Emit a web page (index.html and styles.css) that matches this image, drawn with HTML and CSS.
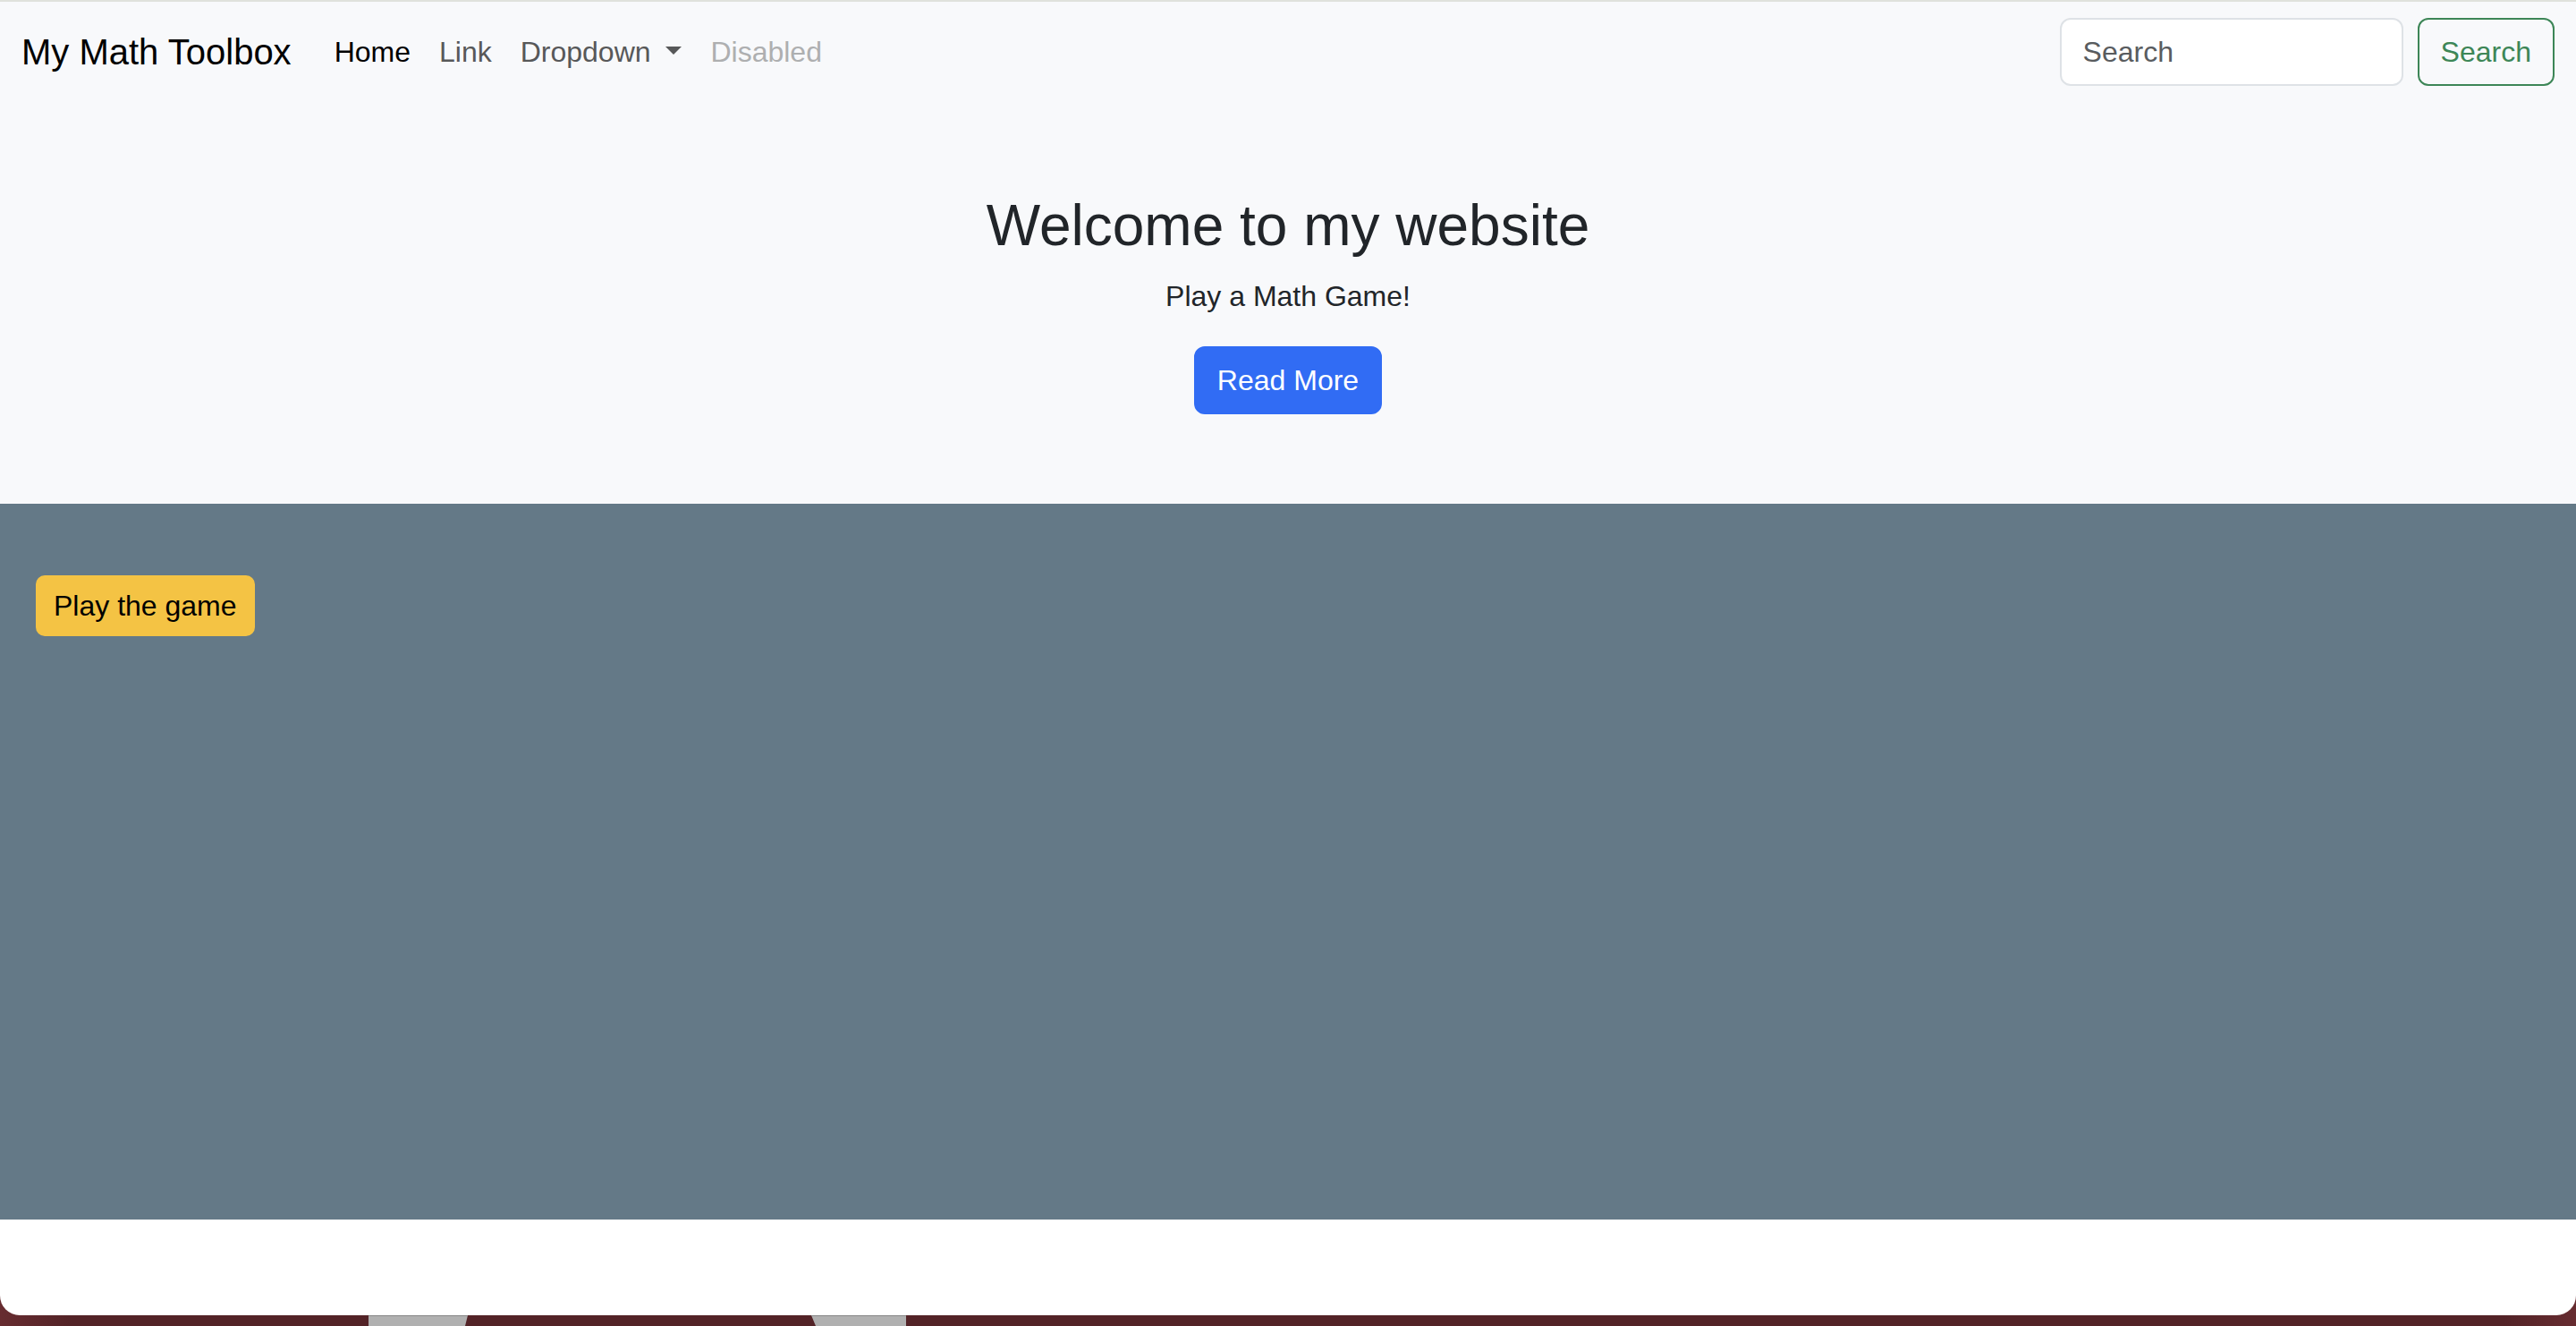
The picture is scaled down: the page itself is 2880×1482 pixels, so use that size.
FILE: index.html
```
<!DOCTYPE html>
<html lang="en">
<head>
<meta charset="utf-8">
<meta name="viewport" content="width=device-width, initial-scale=1">
<title>My Math Toolbox</title>
<link rel="stylesheet" href="styles.css">
</head>
<body>
<div class="window">
  <nav class="navbar">
    <a class="brand" href="#">My Math Toolbox</a>
    <ul class="nav-list">
      <li><a class="nav-link active" href="#" aria-current="page">Home</a></li>
      <li><a class="nav-link" href="#">Link</a></li>
      <li><a class="nav-link dropdown-toggle" href="#" role="button" aria-expanded="false">Dropdown
      </a></li>
      <li><a class="nav-link disabled" href="#" aria-disabled="true">Disabled</a></li>
    </ul>
    <form class="search" role="search">
      <input class="search-input" type="search" placeholder="Search" aria-label="Search">
      <button class="btn btn-outline" type="submit">Search</button>
    </form>
  </nav>
  <header class="hero">
    <h2 class="hero-title">Welcome to my website</h2>
    <p class="hero-text">Play a Math Game!</p>
    <a class="btn btn-primary" href="#">Read More</a>
  </header>
  <main class="game">
    <button class="btn-play" type="button">Play the game</button>
  </main>
</div>
<svg class="wallpaper" width="1014" height="12" viewBox="0 0 1014 12" aria-hidden="true">
  <path d="M412 0H523L520 12H412Z" fill="#b0b0b0"/>
  <path d="M907 0H1013V12H912Z" fill="#b0b0b0"/>
  <path d="M412 0H523M907 0H1013" stroke="#858585" stroke-width="2"/>
</svg>
</body>
</html>
```
FILE: styles.css
```
* {
  box-sizing: border-box;
}

body {
  margin: 0;
  min-height: 100vh;
  display: flex;
  flex-direction: column;
  background: linear-gradient(90deg, #672c30, #532327 80px, #532327 calc(100% - 80px), #672c30);
  color: #212529;
  font-family: "Liberation Sans", Arial, sans-serif;
  font-size: 32px;
  line-height: 48px;
}

.window {
  flex: 1;
  background: #fff;
  border-top: 2px solid #e0e2dc;
  border-radius: 0 0 22px 22px;
}

.wallpaper {
  display: block;
}

.navbar {
  display: flex;
  align-items: center;
  padding: 16px 24px;
  background: #f8f9fb;
}

.brand {
  margin-right: 32px;
  padding: 10px 0;
  color: #000;
  font-size: 40px;
  line-height: 60px;
  text-decoration: none;
  white-space: nowrap;
}

.nav-list {
  display: flex;
  margin: 0 auto 0 0;
  padding: 0;
  list-style: none;
}

.nav-link {
  display: block;
  padding: 16px;
  color: #575859;
  text-decoration: none;
  white-space: nowrap;
}

.nav-link.active {
  color: #000;
}

.nav-link.disabled {
  color: #aeafb0;
  pointer-events: none;
}

.dropdown-toggle::after {
  content: "";
  display: inline-block;
  margin-left: 8px;
  vertical-align: 8px;
  border-top: 9px solid;
  border-right: 9px solid transparent;
  border-left: 9px solid transparent;
}

.search {
  display: flex;
  gap: 16px;
}

.search-input {
  width: 384px;
  padding: 12px 24px;
  border: 2px solid #dee2e6;
  border-radius: 12px;
  background: #fff;
  color: #212529;
  font: inherit;
  appearance: none;
}

.search-input::placeholder {
  color: #595c5f;
  opacity: 1;
}

.btn {
  display: inline-block;
  padding: 12px 24px;
  border: 2px solid transparent;
  border-radius: 12px;
  font: inherit;
  text-decoration: none;
  cursor: pointer;
}

.btn-outline {
  border-color: #3d8657;
  background: transparent;
  color: #3d8657;
}

.btn-primary {
  border-color: #316cf4;
  background: #316cf4;
  color: #fff;
}

.hero {
  display: flex;
  flex-direction: column;
  align-items: center;
  padding: 100px 24px;
  background: #f8f9fb;
  text-align: center;
}

.hero-title {
  margin: 0 0 16px;
  font-size: 64px;
  font-weight: 400;
  line-height: 77px;
}

.hero-text {
  margin: 0 0 32px;
}

.game {
  min-height: 800px;
  padding: 80px 40px;
  background: #647987;
}

.btn-play {
  padding: 10px 20px;
  border: 0;
  border-radius: 10px;
  background: #f4c344;
  color: #000;
  font: inherit;
  cursor: pointer;
}
```
